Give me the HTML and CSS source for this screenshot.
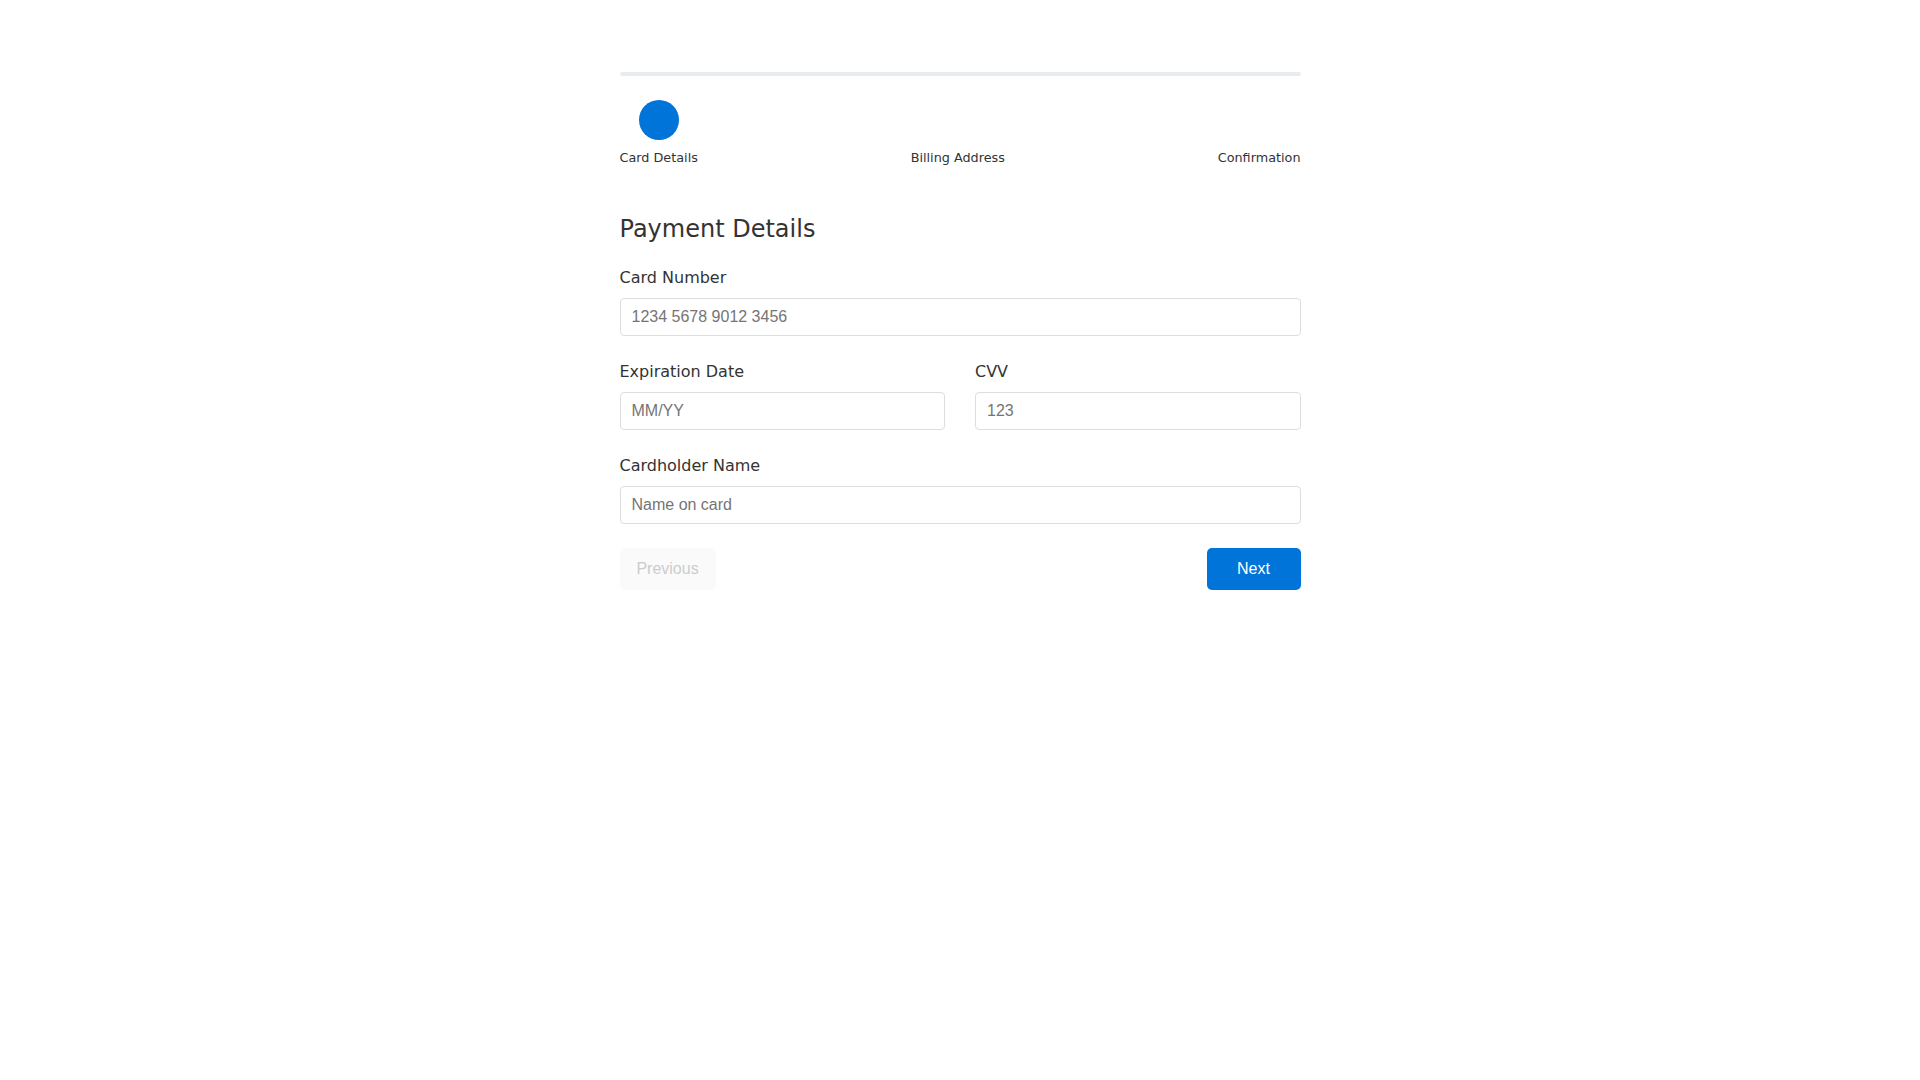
FILE: index.html
```html
<!DOCTYPE html>
<html lang="en">
<head>
<meta charset="utf-8">
<title>Payment Details</title>
<link rel="stylesheet" href="styles.css">
</head>
<body>
<div class="checkout">
  <div class="progress"><div class="progress-fill"></div></div>
  <div class="steps">
    <div class="step active">
      <span class="step-dot"></span>
      <span class="step-label">Card Details</span>
    </div>
    <div class="step">
      <span class="step-dot"></span>
      <span class="step-label">Billing Address</span>
    </div>
    <div class="step">
      <span class="step-dot"></span>
      <span class="step-label">Confirmation</span>
    </div>
  </div>

  <h2 class="title">Payment Details</h2>

  <form class="form">
    <div class="form-group">
      <label class="label" for="card">Card Number</label>
      <input class="input" id="card" type="text" placeholder="1234 5678 9012 3456">
    </div>
    <div class="form-row">
      <div class="form-group">
        <label class="label" for="exp">Expiration Date</label>
        <input class="input" id="exp" type="text" placeholder="MM/YY">
      </div>
      <div class="form-group">
        <label class="label" for="cvv">CVV</label>
        <input class="input" id="cvv" type="text" placeholder="123">
      </div>
    </div>
    <div class="form-group">
      <label class="label" for="name">Cardholder Name</label>
      <input class="input" id="name" type="text" placeholder="Name on card">
    </div>
    <div class="actions">
      <button type="button" class="btn btn-prev" disabled>Previous</button>
      <button type="button" class="btn btn-next">Next</button>
    </div>
  </form>
</div>
</body>
</html>
```

FILE: styles.css
```css
* { box-sizing: border-box; }

html, body {
  margin: 0;
  padding: 0;
  background: #ffffff;
}

body {
  font-family: "DejaVu Sans", sans-serif;
  color: #333333;
}

.checkout {
  width: 681px;
  margin: 0 auto;
  padding: 72px 0 40px;
}

.progress {
  height: 4px;
  background: #e9ecef;
  border-radius: 2px;
  margin-bottom: 24px;
}

.progress-fill {
  width: 0;
  height: 100%;
}

.steps {
  display: flex;
  justify-content: space-between;
}

.step {
  display: flex;
  flex-direction: column;
  align-items: center;
}

.step-dot {
  width: 40px;
  height: 40px;
  border-radius: 50%;
  background: transparent;
}

.step.active .step-dot {
  background: #0074d9;
}

.step-label {
  margin-top: 8px;
  font-size: 12.8px;
  line-height: 1.5;
  color: #333333;
}

.title {
  margin: 48px 0 22px;
  font-size: 24px;
  font-weight: 400;
  line-height: 1.2;
  color: #333333;
}

.form-group {
  margin-bottom: 24px;
}

.form-row {
  display: flex;
  gap: 30px;
}

.form-row .form-group {
  flex: 1;
}

.label {
  display: block;
  margin-bottom: 8px;
  font-size: 16px;
  line-height: 1.5;
  color: #333333;
}

.input {
  display: block;
  width: 100%;
  height: 38px;
  padding: 9px 11px;
  border: 1px solid #dddddd;
  border-radius: 4px;
  font-family: "Liberation Sans", Arial, sans-serif;
  font-size: 16px;
  color: #333333;
  background: #ffffff;
}

.input::placeholder {
  color: #757575;
}

.actions {
  display: flex;
  justify-content: space-between;
}

.btn {
  min-width: 94px;
  padding: 12px 16px;
  border: none;
  border-radius: 5px;
  font-family: "Liberation Sans", Arial, sans-serif;
  font-size: 16px;
  line-height: 18px;
}

.btn-prev {
  min-width: 96px;
  background: #fafafa;
  color: #cccccc;
}

.btn-next {
  background: #0074d9;
  color: #ffffff;
}
```
